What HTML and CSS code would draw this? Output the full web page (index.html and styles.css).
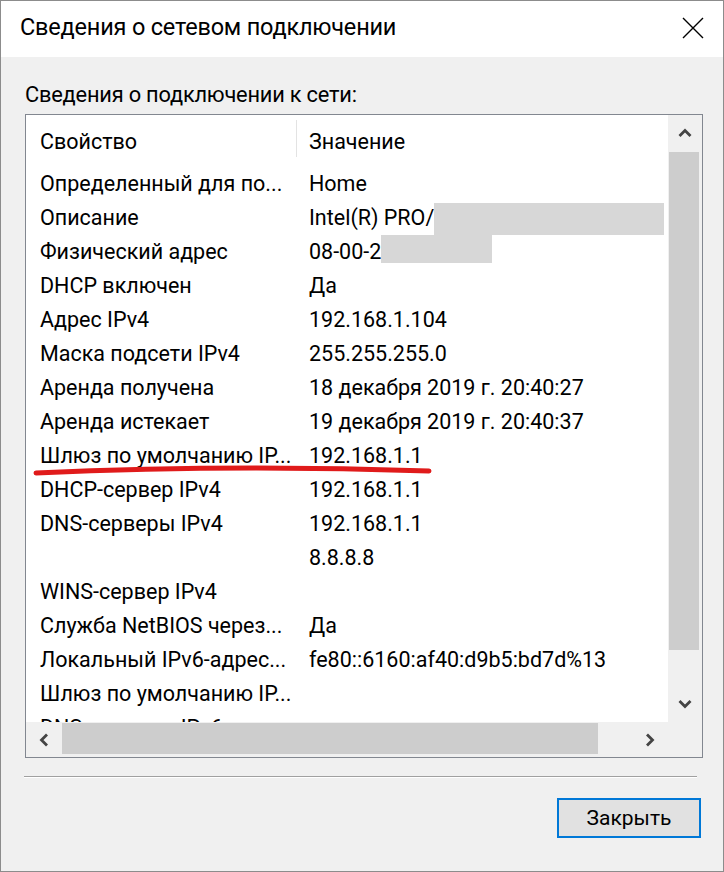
FILE: index.html
```html
<!DOCTYPE html>
<html lang="ru">
<head>
<meta charset="utf-8">
<title>Сведения о сетевом подключении</title>
<link rel="stylesheet" href="styles.css">
</head>
<body>
<div class="window">
  <div class="titlebar">
    <span class="title">Сведения о сетевом подключении</span>
    <span class="close" aria-label="Закрыть">
      <svg width="22" height="22" viewBox="0 0 22 22"><path d="M1 1 L21 21 M21 1 L1 21" stroke="#000" stroke-width="1.4" fill="none"/></svg>
    </span>
  </div>
  <div class="content">
    <div class="label">Сведения о подключении к сети:</div>
    <div class="listbox">
      <div class="list">
        <div class="row header">
          <div class="c1">Свойство</div>
          <div class="c2 hdr2">Значение</div>
        </div>
        <div class="row"><div class="c1">Определенный для по...</div><div class="c2">Home</div></div>
        <div class="row"><div class="c1">Описание</div><div class="c2">Intel(R) PRO/<span class="redact r1"></span></div></div>
        <div class="row"><div class="c1">Физический адрес</div><div class="c2">08-00-2<span class="redact r2"></span></div></div>
        <div class="row"><div class="c1">DHCP включен</div><div class="c2">Да</div></div>
        <div class="row"><div class="c1">Адрес IPv4</div><div class="c2">192.168.1.104</div></div>
        <div class="row"><div class="c1">Маска подсети IPv4</div><div class="c2">255.255.255.0</div></div>
        <div class="row"><div class="c1">Аренда получена</div><div class="c2">18 декабря 2019 г. 20:40:27</div></div>
        <div class="row"><div class="c1">Аренда истекает</div><div class="c2">19 декабря 2019 г. 20:40:37</div></div>
        <div class="row"><div class="c1">Шлюз по умолчанию IP...</div><div class="c2">192.168.1.1</div></div>
        <div class="row"><div class="c1">DHCP-сервер IPv4</div><div class="c2">192.168.1.1</div></div>
        <div class="row"><div class="c1">DNS-серверы IPv4</div><div class="c2">192.168.1.1</div></div>
        <div class="row"><div class="c1"></div><div class="c2">8.8.8.8</div></div>
        <div class="row"><div class="c1">WINS-сервер IPv4</div><div class="c2"></div></div>
        <div class="row"><div class="c1">Служба NetBIOS через...</div><div class="c2">Да</div></div>
        <div class="row"><div class="c1">Локальный IPv6-адрес...</div><div class="c2">fe80::6160:af40:d9b5:bd7d%13</div></div>
        <div class="row"><div class="c1">Шлюз по умолчанию IP...</div><div class="c2"></div></div>
        <div class="row"><div class="c1">DNS-серверы IPv6</div><div class="c2"></div></div>
      </div>
      <div class="vscroll">
        <div class="sbtn">
          <svg width="14" height="10" viewBox="0 0 14 10"><path d="M1.5 8 L7 2.5 L12.5 8" stroke="#444" stroke-width="2.8" fill="none"/></svg>
        </div>
        <div class="vtrack"><div class="vthumb"></div></div>
        <div class="sbtn">
          <svg width="14" height="10" viewBox="0 0 14 10"><path d="M1.5 2 L7 7.5 L12.5 2" stroke="#444" stroke-width="2.8" fill="none"/></svg>
        </div>
      </div>
      <div class="hscroll">
        <div class="hbtn">
          <svg width="10" height="14" viewBox="0 0 10 14"><path d="M8 1.5 L2.5 7 L8 12.5" stroke="#444" stroke-width="2.8" fill="none"/></svg>
        </div>
        <div class="htrack"><div class="hthumb"></div></div>
        <div class="hbtn">
          <svg width="10" height="14" viewBox="0 0 10 14"><path d="M2 1.5 L7.5 7 L2 12.5" stroke="#444" stroke-width="2.8" fill="none"/></svg>
        </div>
      </div>
      <div class="corner"></div>
    </div>
    <div class="separator"></div>
    <div class="actions">
      <button class="btn">Закрыть</button>
    </div>
  </div>
  <svg class="mark" width="724" height="20" viewBox="0 0 724 20"><path d="M36 12 Q 232 3 429 10" stroke="#e01b1b" stroke-width="5" stroke-linecap="round" fill="none"/></svg>
</div>
</body>
</html>
```
FILE: styles.css
```css
* { box-sizing: border-box; }
html, body { margin: 0; padding: 0; }
body {
  width: 724px;
  height: 872px;
  font-family: Roboto, "Noto Sans", sans-serif;
  color: #000;
  background: #f0f0f0;
}
.window {
  position: relative;
  width: 724px;
  height: 872px;
  border: 1px solid #8c8c8c;
  background: #f0f0f0;
  display: flex;
  flex-direction: column;
}
.titlebar {
  height: 56px;
  background: #fff;
  display: flex;
  align-items: center;
  justify-content: space-between;
  padding: 0 19px 4px 19px;
}
.title {
  font-size: 23.5px;
  letter-spacing: -0.2px;
}
.close {
  display: flex;
  margin-top: 2px;
}
.content {
  flex: 1;
  display: flex;
  flex-direction: column;
  padding: 24px 22px 0 24px;
}
.label {
  font-size: 21.8px;
  line-height: 28px;
  height: 28px;
  margin-bottom: 5px;
  letter-spacing: -0.2px;
}
.listbox {
  width: 678px;
  height: 644px;
  border: 1px solid #828790;
  background: #fff;
  display: grid;
  grid-template-columns: 1fr 34px;
  grid-template-rows: 1fr 35px;
}
.list {
  overflow: hidden;
  font-size: 21.5px;
}
.row {
  display: flex;
  height: 34px;
  line-height: 34px;
  white-space: nowrap;
}
.row.header {
  height: 52px;
  padding-top: 10px;
}
.c1 {
  width: 270px;
  flex: 0 0 270px;
  padding-left: 14px;
  overflow: hidden;
}
.c2 {
  flex: 1;
  display: flex;
  padding-left: 13px;
  overflow: hidden;
}
.hdr2 {
  border-left: 1px solid #e3e3e3;
  height: 37px;
  margin-top: -5px;
  padding-top: 5px;
  line-height: 34px;
}
.header .c2 { padding-left: 12px; }
.redact {
  background: #d7d7d7;
  display: block;
}
.r1 {
  flex: 1;
  margin: 2px 4px 0 0;
}
.r2 {
  width: 111px;
  margin: 0 0 6px 0;
}
.vscroll {
  background: #f0f0f0;
  display: flex;
  flex-direction: column;
}
.sbtn {
  height: 36px;
  display: flex;
  align-items: center;
  justify-content: center;
}
.vtrack {
  flex: 1;
  padding: 1px 3px 0 1px;
}
.vthumb {
  height: 498px;
  background: #cdcdcd;
}
.hscroll {
  background: #f0f0f0;
  display: flex;
  align-items: stretch;
}
.hbtn {
  width: 36px;
  display: flex;
  align-items: center;
  justify-content: center;
}
.htrack {
  flex: 1;
  padding: 1px 0 3px 0;
}
.hthumb {
  width: 536px;
  height: 100%;
  background: #cdcdcd;
}
.corner { background: #f0f0f0; }
.separator {
  margin-top: 18px;
  margin-left: -1px;
  width: 673px;
  height: 2px;
  border-top: 1px solid #a0a0a0;
  border-bottom: 1px solid #fff;
}
.actions {
  display: flex;
  justify-content: flex-end;
  margin-top: 20px;
}
.btn {
  width: 144px;
  height: 40px;
  border: 2px solid #0078d7;
  background: #e1e1e1;
  font-family: Roboto, "Noto Sans", sans-serif;
  font-size: 21px;
  color: #000;
  padding: 0;
}
.mark {
  position: absolute;
  left: -1px;
  top: 460px;
}
```
